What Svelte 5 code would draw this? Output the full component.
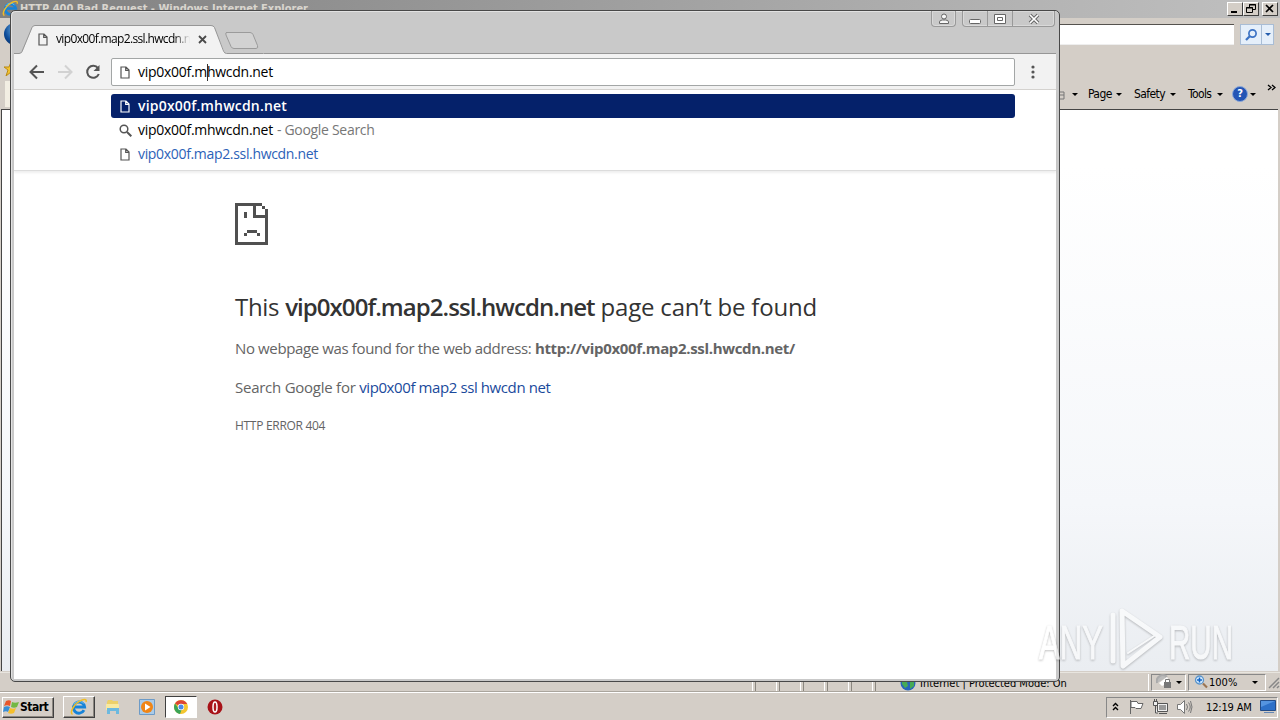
<script lang="ts">
  interface Suggestion {
    icon: "page" | "search";
    text: string;
    note?: string;
    kind: "selected" | "query" | "url";
  }

  const suggestions: Suggestion[] = [
    { icon: "page", text: "vip0x00f.mhwcdn.net", kind: "selected" },
    { icon: "search", text: "vip0x00f.mhwcdn.net", note: "- Google Search", kind: "query" },
    { icon: "page", text: "vip0x00f.map2.ssl.hwcdn.net", kind: "url" },
  ];
  const commands = ["Page", "Safety", "Tools"];
  const host = "vip0x00f.map2.ssl.hwcdn.net";
</script>

{#snippet pageIcon()}
  <svg class="page-icon" width="10" height="13" viewBox="0 0 10 13" fill="none" stroke="currentColor" stroke-width="1.2">
    <path d="M1 1h5l3 3v8H1zM5.7 1v3.4H9" />
  </svg>
{/snippet}

{#snippet ieLogo(size: number)}
  <svg width={size} height={size} viewBox="0 0 18 18" fill="none">
    <path d="M14 12.2A5.6 5.6 0 1 1 14.6 9H5" stroke="#1683d8" stroke-width="2.9" />
    <path d="M13.4 5.6A5.5 5.5 0 0 0 4 6.5" stroke="#6cc9f5" stroke-width="1" />
    <path d="M2.5 16.5C-1 14 5 5 11 2.4c3-1.4 6-1.6 5 1.5" stroke="#f0bd25" stroke-width="1.5" />
  </svg>
{/snippet}

<div class="desktop">
  <div class="ie">
    <header class="ie-title">
      {@render ieLogo(17)}
      <span class="ie-name">HTTP 400 Bad Request - Windows Internet Explorer</span>
      <div class="ie-buttons">
        <span><svg width="14" height="12"><path d="M3 9h6" stroke="#000" stroke-width="2" /></svg></span>
        <span><svg width="14" height="12" fill="none" stroke="#000"><path d="M5.5 4V1.5h6v5H9M5 2h7M2.5 4.500h6v5h-6zM2 5h7" /></svg></span>
        <span class="gap"><svg width="14" height="12"><path d="M3 2l7 7M10 2l-7 7" stroke="#000" stroke-width="1.7" /></svg></span>
      </div>
    </header>
    <div class="ie-address">
      <span class="orb"></span>
      <div class="ie-input"></div>
      <div class="ie-search">
        <span class="lens"><svg width="14" height="14" fill="none" stroke="#3b72c4"><circle cx="8.500" cy="5.500" r="3.600" stroke-width="1.7" /><path d="M6 8l-4 4" stroke-width="2.3" /></svg></span>
        <span class="drop"><i class="tri blue"></i></span>
      </div>
    </div>
    <div class="ie-commands">
      <svg class="star" width="14" height="14" viewBox="0 0 14 14"><path d="M7 0l2 5h5l-4 3 2 6-5-4-5 4 2-6-4-3h5z" fill="#f4c430" stroke="#b98a15" /></svg>
      <span class="old-tab"></span>
      <div class="menu">
        <svg width="8" height="11" fill="none" stroke="#777"><path d="M0 3h4v7H0M0 6h4" /></svg>
        <i class="tri print"></i>
        {#each commands as command}
          <span class="command {command.toLowerCase()}">{command}<i class="tri"></i></span>
        {/each}
        <span class="help">?</span>
        <i class="tri help-tri"></i>
        <svg class="more" width="9" height="8" fill="none" stroke="#000" stroke-width="1.3"><path d="M1 1l3 2.500-3 2.500M5 1l3 2.500-3 2.500" /></svg>
      </div>
    </div>
    <div class="ie-page"></div>
    <footer class="ie-status">
      <span class="panes">{#each Array(6) as _}<i></i>{/each}</span>
      <svg class="globe" width="16" height="16" viewBox="0 0 16 16"><circle cx="8" cy="8" r="7.500" fill="#2865bb" /><path d="M2 5l5-3 3 2-3 3 1 4-3 2-3-4zM10 7l4-1v5l-4 3z" fill="#47aa55" /></svg>
      <span class="zone">Internet | Protected Mode: On</span>
      <span class="cell lock">
        <svg width="18" height="16"><path d="M1 9a6 6 0 0 1 10-6" fill="#bbb" stroke="#aaa" stroke-width="2" /><path d="M3 9l8-6 3 5-8 4z" fill="#fff" /><rect x="8" y="8" width="7" height="6" fill="#777" /><path d="M9.500 8V5.500h4V8" fill="none" stroke="#777" /></svg>
        <i class="tri"></i>
      </span>
      <span class="cell zoom">
        <svg width="14" height="14" fill="none"><circle cx="5.500" cy="5" r="4" fill="#d8edff" stroke="#5a94ca" stroke-width="1.300" /><path d="M3 5h5M5.500 2.500v5" stroke="#1265c7" stroke-width="1.600" /><path d="M9 8.500l4 4" stroke="#9b7552" stroke-width="2.200" /></svg>
        <b>100%</b>
        <i class="tri"></i>
      </span>
      <svg class="grip" width="12" height="13" stroke="#888" stroke-width="1.500"><path d="M1 12L11 2M5 12l6-6M9 12l2-2" /></svg>
    </footer>
  </div>

  <div class="taskbar">
    <div class="start">
      <svg width="17" height="16" viewBox="0 0 17 16"><path d="M3 2c2-1 4-1 5 0L7 7C5 6 3 6 1 7z" fill="#e8562b" /><path d="M9 3c2 1 4 1 7 0l-2 5c-2 1-4 1-6 0z" fill="#71b843" /><path d="M1 8c2-1 4-1 6 0l-2 5c-1-1-3-1-5 0z" fill="#388ed6" /><path d="M7 9c2 1 4 1 6 0l-2 5c-2 1-4 1-6 0z" fill="#f5bf2c" /></svg>
      Start
    </div>
    <div class="apps">
      <span class="app raised">{@render ieLogo(18)}</span>
      <span class="app"><svg width="16" height="16"><path d="M2 3l1-2h4l1 1h5v7H2z" fill="#ecd06a" /><path d="M1 5h13v6H1z" fill="#f8e9a0" /><path d="M2 14V9h12v6h-3v-3H5v3H2z" fill="#6cb9df" /></svg></span>
      <span class="app"><svg width="16" height="16"><path d="M.5.500h15v15H.5z" fill="#aacbe8" stroke="#6d9bc7" /><circle cx="8" cy="8" r="6" fill="#f08516" /><path d="M6 4.500v7L11.500 8z" fill="#fff" /></svg></span>
      <span class="app active">
        <svg width="14" height="14" viewBox="0 0 14 14"><circle cx="7" cy="7" r="7" fill="#f4c630" /><path d="M7 7L1 3.500A7 7 0 0 1 13.200 4H7z" fill="#dc4535" /><path d="M1 3.500L5 9l2.500 1-1.500 4A7 7 0 0 1 1 3.500z" fill="#3ba457" /><circle cx="7" cy="7" r="3.200" fill="#fff" /><circle cx="7" cy="7" r="2.500" fill="#4a8ae8" /></svg>
      </span>
      <span class="app"><svg width="16" height="16"><circle cx="8" cy="8" r="7.500" fill="#a81218" /><ellipse cx="8" cy="8" rx="2" ry="5" fill="#b01c20" stroke="#fff" stroke-width="1.500" /></svg></span>
    </div>
    <div class="tray">
      <svg width="7" height="10" fill="none" stroke="#000" stroke-width="1.400"><path d="M1 4l2.500-2.500L6 4M1 8l2.500-2.500L6 8" /></svg>
      <svg class="flag" width="17" height="16" fill="#fff" stroke="#666"><path d="M2.500 1v14M3 2.500h6l1 2h5l-2 5H8l-1-1H3z" /></svg>
      <svg class="net" width="17" height="16" fill="#eee" stroke="#555"><path d="M5.500 4.500h10v8h-10zM7 14.500h8M1.500 2.500h4v4h-4zM3.500 7v7H6M2.500 0v2M4.500 0v2" /><path d="M7 6h7v5H7z" fill="#999" stroke="none" /></svg>
      <svg class="speaker" width="17" height="16" fill="#fff" stroke="#777"><path d="M1.500 5.500h3l4-4v13l-4-4h-3z" /><path d="M10.500 5q2 3 0 6M12.500 3.500q3.500 4.500 0 9M14.500 2q3 6 0 12" fill="none" /></svg>
      <span class="clock">12:19 AM</span>
      <svg class="show" width="16" height="14"><path d="M.5.500h15v10H.5z" fill="#2d70c8" stroke="#234c88" /><path d="M1 1h14L1 7z" fill="#5594e0" /><path d="M4 12.500h10" stroke="#6487b5" /></svg>
    </div>
  </div>

  <div class="chrome">
    <div class="tabstrip">
      <svg class="tab-shape" width="250" height="30" viewBox="0 0 250 30">
        <path d="M0 29.500h6q2 0 3-3L18 4q1-2.500 3-2.500h176q2.500 0 3.500 2.500l9.500 23q1 2.500 3 2.500V30H0z" fill="#f2f2f2" />
        <path d="M0 29.500h5q2 0 3-2L18 3.500q1-2 3-2h176q2.500 0 3.500 2l9 23.500q1 2.500 3 2.500h37" fill="none" stroke="#969696" />
        <path d="M212 8.500h24q2 0 3 2l4.500 11q1 3-1.500 3h-22q-2 0-3-2l-5-11.500q-1-2.500 1-2.500z" fill="#d2d2d2" stroke="#9b9b9b" />
      </svg>
      <div class="tab">
        {@render pageIcon()}
        <span class="tab-title">{host}</span>
        <svg width="9" height="9" stroke="#4a4a4a" stroke-width="1.800"><path d="M1 1l7 7M8 1L1 8" /></svg>
      </div>
      <div class="caption">
        <span class="profile"><svg width="12" height="12" fill="#f7f7f7" stroke="#666"><circle cx="6" cy="3.500" r="2.500" /><path d="M1.500 10.500V9q0-2 3-2h3q3 0 3 2v1.500z" /></svg></span>
        <div class="window-buttons">
          <span><svg width="13" height="12" fill="#fff" stroke="#666"><rect x=".5" y="6.500" width="11" height="4" rx="1" /></svg></span>
          <span><svg width="12" height="12" fill="#fff" stroke="#666"><path d="M.5 1.500h11v9H.5zM3.500 4.500h5v3h-5z" /></svg></span>
          <span class="close"><svg width="12" height="12"><path d="M2 2l8 8M10 2l-8 8" stroke="#666" stroke-width="3.600" /><path d="M2 2l8 8M10 2l-8 8" stroke="#fff" stroke-width="1.700" /></svg></span>
        </div>
      </div>
    </div>
    <div class="toolbar">
      <svg width="16" height="16" fill="none" stroke="#555" stroke-width="2"><path d="M15 8H2M8 1.500L1.500 8 8 14.500" /></svg>
      <svg width="16" height="16" fill="none" stroke="#d2d2d2" stroke-width="2"><path d="M1 8h13M8 1.500L14.500 8 8 14.500" /></svg>
      <svg width="16" height="16" fill="none" stroke="#555" stroke-width="2"><path d="M13 4.200A6 6 0 1 0 13.800 10" /><path d="M14.500 1v6h-6z" fill="#555" stroke="none" /></svg>
      <div class="omnibox">
        {@render pageIcon()}
        <span class="typed">vip0x00f.m<i class="caret"></i>hwcdn.net</span>
      </div>
      <svg class="dots" width="4" height="14" fill="#555"><circle cx="2" cy="2" r="1.600" /><circle cx="2" cy="7" r="1.600" /><circle cx="2" cy="12" r="1.600" /></svg>
    </div>
    <div class="dropdown">
      {#each suggestions as item}
        <div class="suggestion {item.kind}">
          {#if item.icon === "page"}
            {@render pageIcon()}
          {:else}
            <svg class="magnify" width="13" height="13" fill="none" stroke="#555"><circle cx="5" cy="5" r="3.800" stroke-width="1.500" /><path d="M8 8l4.300 4.300" stroke-width="2" /></svg>
          {/if}
          <span class="match">{item.text}</span>
          {#if item.note}<span class="note">{item.note}</span>{/if}
        </div>
      {/each}
    </div>
    <main class="error">
      <svg class="sad" width="33" height="42" viewBox="0 0 33 42" fill="#505050" shape-rendering="crispEdges">
        <path d="M0 0h27v3h-6v9h9V6h3v36H0zM3 3v36h27V15H18V3zM27 3h3v3h-3zM9 9h3v6H9zM12 27h10v3H12zM9 30h3v3H9zM22 30h3v3h-3z" fill-rule="evenodd" />
      </svg>
      <h1><span>This</span> <strong>{host}</strong> <span class="tail">page can’t be found</span></h1>
      <p class="reason"><span>No webpage was found for the web address:</span> <strong>http://{host}/</strong></p>
      <p class="search"><span>Search Google for</span> <a href="#search">vip0x00f map2 ssl hwcdn net</a></p>
      <p class="code">HTTP ERROR 404</p>
    </main>
  </div>

  <svg class="watermark" width="210" height="70" viewBox="0 0 210 70">
    <g class="mark-text">
      <text x="9" y="54" textLength="64" lengthAdjust="spacingAndGlyphs">ANY</text>
      <text x="139" y="54" textLength="64" lengthAdjust="spacingAndGlyphs">RUN</text>
    </g>
    <path d="M83 10v46M92 6L130 32 93 61z" />
    <path class="inner" d="M98 48l26-17" />
  </svg>
</div>

<style>
  :global(body) { margin: 0; overflow: hidden; }
  .desktop { position: relative; width: 1280px; height: 720px; display: flex; flex-direction: column; overflow: hidden; background: #d4d0c8; font: 11px "DejaVu Sans Condensed", "DejaVu Sans", sans-serif; color: #000; }
  svg { display: block; flex: none; }
  i { font-style: normal; }
  .tri { display: inline-block; border: 3px solid transparent; border-top-color: #000; border-bottom: 0; }
  .tri.blue { border-top-color: #245dad; }

  .ie { height: 692px; display: flex; flex-direction: column; background: #d4cec7; }
  .ie-title { height: 18px; display: flex; align-items: center; box-sizing: border-box; padding: 0 2px; background: linear-gradient(90deg, #808080, #c0c0c0); }
  .ie-name { margin-left: 1px; color: #d9d5ce; font-weight: bold; letter-spacing: 0; white-space: nowrap; }
  .ie-buttons { margin-left: auto; display: flex; }
  .ie-buttons span { width: 14px; height: 12px; border: 1px solid; border-color: #fff #404040 #404040 #fff; background: #d4cec7; }
  .ie-buttons .gap { margin-left: 3px; }
  .ie-address { height: 40px; display: flex; align-items: center; padding: 0 6px 6px 4px; box-sizing: border-box; }
  .orb { width: 22px; height: 22px; border-radius: 50%; background: radial-gradient(circle at 60% 30%, #8ac8f0, #0e4e9c 60%, #05214f); margin-top: -2px; }
  .ie-input { margin-left: 14px; flex: 1; height: 19px; border-top: 1px solid #55524e; border-bottom: 1px solid #eee; background: #fff; margin-right: 6px; }
  .ie-search { display: flex; height: 19px; border: 1px solid #a9bdd5; background: #e5effa; }
  .lens { width: 20px; display: grid; place-items: center; border-right: 1px solid #a9bdd5; }
  .drop { width: 11px; display: grid; place-items: center; }
  .ie-commands { height: 51px; display: flex; align-items: center; }
  .star { margin-left: 4px; margin-top: -28px; }
  .old-tab { width: 22px; height: 26px; margin: 22px 0 0 -13px; background: #f2eee3; }
  .menu { margin-left: auto; display: flex; align-items: center; height: 20px; margin-top: 22px; }
  .print { margin: 0 10px 0 4px; }
  .command { display: flex; align-items: center; justify-content: space-between; font-size: 12px; letter-spacing: -0.6px; }
  .page { width: 34px; margin-right: 12px; }
  .safety { width: 42px; margin-right: 12px; }
  .tools { width: 35px; margin-right: 9px; }
  .help { width: 14px; height: 14px; border: 1px solid #8ca9d8; border-radius: 50%; background: #2455b5; color: #fff; font-weight: bold; line-height: 14px; text-align: center; }
  .help-tri { margin: 0 11px 0 2px; }
  .more { margin: -13px 4px 0 0; }
  .ie-page { height: 562px; margin: 0 2px 0 1px; border-top: 1px solid #454545; border-left: 1px solid #454545; background: linear-gradient(#fff 10%, #f5f7fa 70%, #eaedf1); }
  .ie-status { flex: 1; margin-top: 1px; display: flex; align-items: center; border-top: 1px solid #e8e5df; border-bottom: 1px solid #aaa59d; white-space: nowrap; }
  .panes { display: flex; width: 900px; box-sizing: border-box; padding-left: 752px; }
  .panes i { width: 2px; margin-right: 20px; height: 17px; border-left: 1px solid #fff; border-right: 1px solid #8b8780; }
  .globe { margin-top: 2px; }
  .zone { margin-left: 4px; width: 228px; border-right: 1px solid #fff; height: 17px; line-height: 19px; }
  .cell { height: 17px; display: flex; align-items: center; border: 1px solid; border-color: #888 #fff #fff #888; box-sizing: border-box; }
  .lock { margin-left: 2px; width: 35px; gap: 2px; padding-left: 4px; }
  .zoom { margin-left: 2px; width: 78px; padding-left: 5px; }
  .zoom b { font-weight: normal; width: 43px; margin-left: 1px; }
  .grip { margin-left: 2px; }

  .taskbar { height: 28px; box-sizing: border-box; border-top: 1px solid #fff; background: #d4cec7; display: flex; align-items: center; }
  .start { width: 50px; height: 19px; margin: 1px 0 0 2px; border: 1px solid; border-color: #fff #404040 #404040 #fff; display: flex; align-items: center; font-weight: bold; font-size: 12px; letter-spacing: -0.5px; box-shadow: inset -1px -1px #8b8780; }
  .apps { margin-left: 9px; display: flex; align-items: center; gap: 2px; }
  .app { width: 32px; height: 22px; display: grid; place-items: center; box-sizing: border-box; }
  .raised { border: 1px solid; border-color: #fff #404040 #404040 #fff; box-shadow: inset -1px -1px #8b8780; }
  .active { border: 1px solid; border-color: #404040 #fff #fff #404040; background: #fff; }
  .tray { width: 172px; height: 21px; box-sizing: border-box; margin: 1px 2px 0 auto; border: 1px solid; border-color: #888 #fff #fff #888; display: flex; align-items: center; padding-left: 5px; }
  .flag { margin-left: 9px; }
  .net { margin-left: 7px; }
  .speaker { margin-left: 7px; }
  .clock { margin-left: 13px; width: 54px; letter-spacing: -0.15px; white-space: nowrap; }

  .chrome { position: absolute; left: 10px; top: 10px; width: 1050px; height: 672px; box-sizing: border-box; border: 1px solid #484848; border-radius: 5px; background: #c9c9c9; padding: 0 3px 2px; display: flex; flex-direction: column; font-family: "Open Sans", "Noto Sans", sans-serif; box-shadow: inset 1px 1px #e2e2e2; }
  .tabstrip { height: 43px; position: relative; display: flex; flex: none; }
  .tabstrip::after { content: ""; position: absolute; left: 250px; right: 0; bottom: 0; border-bottom: 1px solid #969696; }
  .tab-shape { position: absolute; left: 0; bottom: 0; }
  .tab { position: relative; display: flex; align-items: center; height: 26px; margin: 15px 0 0 24px; width: 171px; color: #000; }
  .page-icon { color: #555; }
  .tab-title { width: 134px; margin: -1px 8px 0 8px; overflow: hidden; white-space: nowrap; font-size: 12px; letter-spacing: -0.65px; mask-image: linear-gradient(90deg, #000 88%, transparent); }
  .caption { margin-left: auto; margin-right: 1px; display: flex; gap: 6px; height: 16px; }
  .profile, .window-buttons { border: 1px solid #999; border-top: 0; border-radius: 0 0 4px 4px; box-shadow: inset 0 0 0 1px #d9d9d9; }
  .profile { width: 23px; display: grid; place-items: center; }
  .window-buttons { display: flex; }
  .window-buttons span { width: 24px; display: grid; place-items: center; border-right: 1px solid #999; }
  .window-buttons .close { width: 41px; border: 0; }
  .toolbar { height: 36px; box-sizing: border-box; flex: none; display: flex; align-items: center; gap: 12px; padding: 1px 21px 0 15px; background: #f2f2f2; border-bottom: 1px solid #d4d2cf; }
  .omnibox { flex: 1; height: 26px; margin-left: -2px; margin-right: 4px; border: 1px solid #a3a6a6; border-radius: 2px; background: #fff; display: flex; align-items: center; padding-left: 8px; }
  .typed, .match { margin: -2px 0 0 8px; font-size: 14px; letter-spacing: -0.28px; white-space: nowrap; }
  .caret { display: inline-block; width: 1px; height: 17px; margin-right: -1px; background: #333; vertical-align: -4px; }
  .dropdown { height: 81px; box-sizing: border-box; flex: none; background: #fff; padding: 4px 41px 0 97px; border-bottom: 1px solid #dcdcdc; box-shadow: 0 2px 2px #0001; z-index: 1; }
  .suggestion { height: 24px; display: flex; align-items: center; padding-left: 9px; border-radius: 3px; font-size: 14px; }
  .selected { background: #05216a; color: #fff; }
  .selected .page-icon { color: #fff; }
  .selected .match { font-weight: 600; letter-spacing: 0.2px; }
  .magnify { margin: 0 -2px 0 -1px; }
  .url .match { color: #2c62b8; letter-spacing: -0.33px; }
  .note { margin: -2px 0 0 4px; color: #777; letter-spacing: -0.3px; }
  .error { flex: 1; background: #fff; padding: 32px 0 0 221px; color: #646464; font-size: 15px; white-space: nowrap; overflow: hidden; }
  h1 { margin: 44px 0 0; font-size: 24px; line-height: 36px; font-weight: normal; color: #333; letter-spacing: -0.3px; }
  h1 strong { font-weight: 600; letter-spacing: -0.94px; }
  h1 .tail { letter-spacing: -0.2px; }
  p { margin: 0; }
  .error p { letter-spacing: -0.3px; }
  .error .reason { margin-top: 13px; line-height: 20px; letter-spacing: -0.37px; }
  .reason strong { letter-spacing: -0.33px; }
  .search { margin-top: 19px; line-height: 20px; }
  .search span { letter-spacing: -0.25px; }
  .search a { color: #1a4a9c; text-decoration: none; letter-spacing: -0.4px; }
  .code { margin-top: 19px; line-height: 20px; font-size: 12px; }

  .watermark { position: absolute; left: 1030px; top: 605px; filter: drop-shadow(0 1px 1px #0006); opacity: 0.6; }
  .watermark path { fill: none; stroke: #fff; stroke-width: 5; stroke-linejoin: round; stroke-linecap: round; }
  .watermark .inner { stroke-width: 2; }
  .mark-text { font: 48px "Liberation Sans Narrow", "Liberation Sans", sans-serif; fill: #fff; stroke: #fff; stroke-width: 1; }
</style>
